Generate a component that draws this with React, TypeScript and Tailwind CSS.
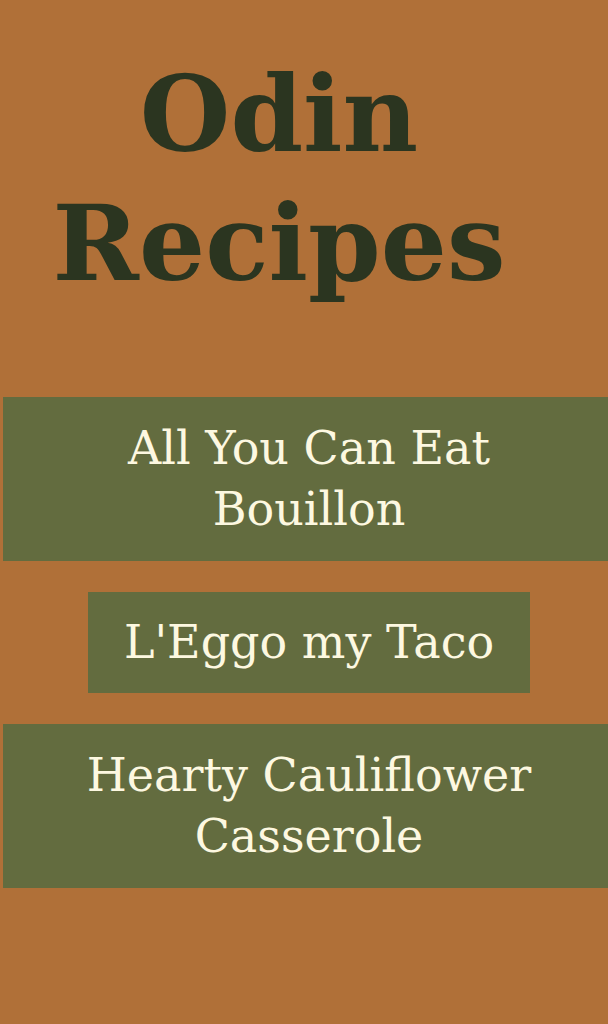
const recipes = [
  { name: "All You Can Eat Bouillon", wide: true },
  { name: "L'Eggo my Taco", wide: false },
  { name: "Hearty Cauliflower Casserole", wide: true },
];

const App = () => {
  return (
    <div className="min-h-screen w-full overflow-hidden bg-[#b07038] font-['DejaVu_Serif',serif]">
      <div className="flex w-[618px] flex-col items-center pt-[50px] pb-[135px]">
        <h1 className="mr-[60px] w-[520px] text-center text-[104px] leading-[129px] font-bold text-[#2b3520]">
          Odin Recipes
        </h1>

        <ul className="mt-[89px] flex w-full flex-col items-center gap-[31px]">
          {recipes.map((r) => (
            <li
              key={r.name}
              className={
                r.wide
                  ? "w-[612px] bg-[#636c3f] px-[40px] py-[21px] text-center text-[46px] leading-[61px] text-[#fdf8e1]"
                  : "w-[442px] bg-[#636c3f] py-[20px] text-center text-[46px] leading-[61px] text-[#fdf8e1]"
              }
            >
              {r.name}
            </li>
          ))}
        </ul>
      </div>
    </div>
  );
};

export default App;
